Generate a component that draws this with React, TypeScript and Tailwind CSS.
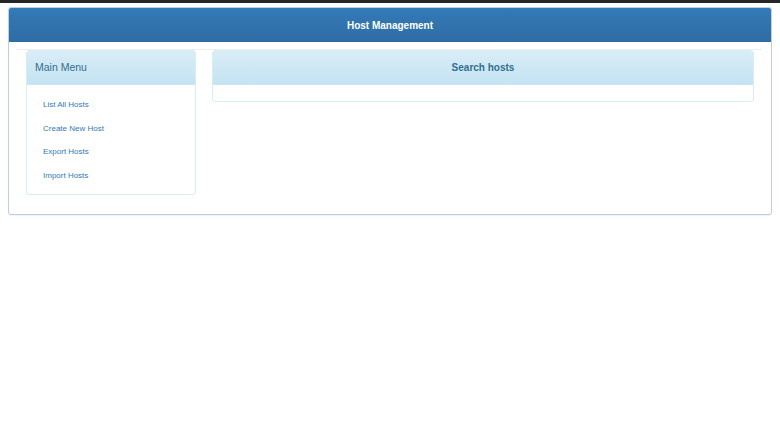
import React from 'react';

const links = ['List All Hosts', 'Create New Host', 'Export Hosts', 'Import Hosts'];

export default function App() {
  return (
    <div className="min-h-[439px] bg-white font-['Liberation_Sans',Arial,sans-serif]">
      <div className="h-[3px] bg-[#262626]" />
      <div className="mx-2 mt-1 rounded-[3px] border border-[#b9d0e6] bg-white shadow-[0_1px_1px_rgba(0,0,0,0.05)]">
        <div className="flex h-[34px] items-center justify-center rounded-t-[2px] bg-gradient-to-b from-[#337ab7] to-[#2e6da4] text-[10px] font-bold text-white">
          Host Management
        </div>
        <div className="pb-[19px] pt-[7px]">
          <div className="ml-2 mr-[9px] h-px bg-[#eeeeee]" />
          <div className="flex items-start gap-4 px-[17px]">
            <div className="w-[170px] rounded-[3px] border border-[#d6eef6]">
              <div className="flex h-[34px] items-center rounded-t-[2px] border-b border-[#c9e6f2] bg-gradient-to-b from-[#d9edf7] to-[#c4e3f3] px-2 text-[10.5px] font-medium text-[#31708f]">
                Main Menu
              </div>
              <ul className="flex flex-col gap-[12px] px-4 pb-[13px] pt-[14px]">
                {links.map((l) => (
                  <li key={l} className="text-[8px] leading-[11.5px] text-[#337ab7]">
                    <a href="#">{l}</a>
                  </li>
                ))}
              </ul>
            </div>
            <div className="flex-1 rounded-[3px] border border-[#d6eef6]">
              <div className="flex h-[34px] items-center justify-center rounded-t-[2px] border-b border-[#c9e6f2] bg-gradient-to-b from-[#d9edf7] to-[#c4e3f3] text-[10px] font-bold text-[#31708f]">
                Search hosts
              </div>
              <div className="h-4" />
            </div>
          </div>
        </div>
      </div>
    </div>
  );
}
